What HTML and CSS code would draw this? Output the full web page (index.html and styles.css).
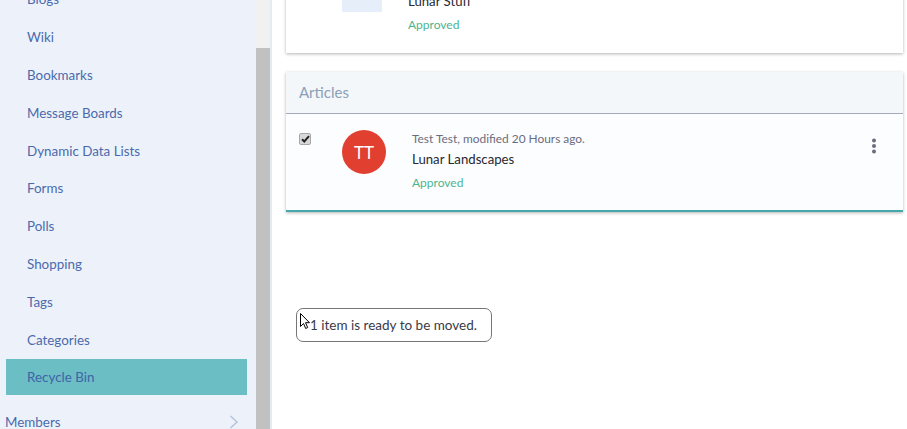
FILE: index.html
```html
<!DOCTYPE html>
<html lang="en">
<head>
<meta charset="utf-8">
<title>Recycle Bin</title>
<link rel="stylesheet" href="styles.css">
</head>
<body>
<div class="page">
  <aside class="sidebar">
    <nav class="nav">
      <a class="nav-item">Blogs</a>
      <a class="nav-item">Wiki</a>
      <a class="nav-item">Bookmarks</a>
      <a class="nav-item">Message Boards</a>
      <a class="nav-item">Dynamic Data Lists</a>
      <a class="nav-item">Forms</a>
      <a class="nav-item">Polls</a>
      <a class="nav-item">Shopping</a>
      <a class="nav-item">Tags</a>
      <a class="nav-item">Categories</a>
      <a class="nav-item active">Recycle Bin</a>
      <a class="nav-group">Members
        <svg class="chevron" width="10" height="14" viewBox="0 0 10 14"><path d="M1.500 1 8 7l-6.500 6" fill="none" stroke="#b4c3de" stroke-width="1.500"/></svg>
      </a>
    </nav>
  </aside>
  <div class="scrollbar"><div class="thumb"></div></div>
  <main class="main">
    <section class="card first">
      <div class="row row-top">
        <div class="thumb-col"><div class="doc-thumb"><span class="doc-mark"></span></div></div>
        <div class="info">
          <div class="title">Lunar Stuff</div>
          <div class="status">Approved</div>
        </div>
      </div>
    </section>
    <section class="card">
      <header class="card-head">Articles</header>
      <div class="row row-article">
        <span class="check"><svg width="9" height="8" viewBox="0 0 9 8"><path d="M1 4.200 3.300 6.500 8 1.200" fill="none" stroke="#222" stroke-width="2"/></svg></span>
        <div class="avatar">TT</div>
        <div class="info">
          <div class="meta">Test Test, modified 20 Hours ago.</div>
          <div class="title">Lunar Landscapes</div>
          <div class="status">Approved</div>
        </div>
        <svg class="kebab" width="6" height="16" viewBox="0 0 6 16"><circle cx="3" cy="2.500" r="2" fill="#6b6c7e"/><circle cx="3" cy="8" r="2" fill="#6b6c7e"/><circle cx="3" cy="13.500" r="2" fill="#6b6c7e"/></svg>
      </div>
    </section>
    <div class="drag-tip">1 item is ready to be moved.
      <svg class="cursor" width="11" height="17" viewBox="0 0 11 17"><path d="M.5.500v13l3-3 2.200 5 2-1-2.200-4.800H9.500z" fill="#fff" stroke="#000"/></svg>
    </div>
  </main>
</div>
</body>
</html>
```
FILE: styles.css
```css
* { box-sizing: border-box; }
html, body { margin: 0; height: 100%; overflow: hidden; background: #fff; }
body { font-family: Lato, sans-serif; font-size: 13.400px; color: #272833; }
.page { display: flex; height: 429px; width: 907px; overflow: hidden; }
.sidebar { width: 256px; flex: none; background: #edf2fa; overflow: hidden; }
.nav { display: flex; flex-direction: column; margin-top: -20px; padding-left: 6px; }
.nav-item { display: flex; align-items: center; height: 37.900px; width: 241px; padding-left: 21px; color: #4b6aad; }
.nav-item.active { background: #6bbec3; height: 36px; color: #3f64a8; }
.nav-group { display: flex; justify-content: space-between; align-items: center; margin: 9px 17px 0 -1px; height: 36px; color: #4b6aad; }
.scrollbar { width: 14px; flex: none; background: #f1f1f1; padding-top: 48px; }
.thumb { height: 100%; background: #c1c1c1; }
.main { flex: 1; border-left: 2px solid #e3ebf5; padding: 0 4px 0 14px; position: relative; }
.card { background: #fff; box-shadow: 0 1px 3px rgba(39, 40, 51, .35); }
.first { margin-top: -20px; height: 73px; margin-bottom: 19px; }
.row { display: flex; align-items: flex-start; }
.row-top { padding-left: 56px; }
.thumb-col { width: 66px; flex: none; }
.doc-thumb { width: 40px; height: 32px; background: #e6eff9; display: flex; justify-content: center; align-items: flex-start; padding-top: 18px; }
.doc-mark { width: 12px; height: 2px; background: #a7a9bc; }
.card-head { height: 42px; background: #f4f7fa; border-bottom: 1px solid #a7a9bc; display: flex; align-items: center; padding: 0 0 2px 13px; font-size: 15px; color: #8aa0b8; }
.row-article { position: relative; height: 98px; background: #fcfdfe; border-bottom: 2px solid #45a8ac; padding: 16px 0 0 13px; }
.check { width: 12px; height: 12px; margin: 3px 31px 0 0; flex: none; display: flex; align-items: center; justify-content: center; background: #d8d8d8; border: 1px solid #a8a8a8; border-radius: 2px; }
.avatar { width: 44px; height: 44px; border-radius: 50%; background: #e14031; color: #fff; font-size: 17px; display: flex; align-items: center; justify-content: center; margin-right: 26px; flex: none; }
.info { display: flex; flex-direction: column; }
.meta { color: #6b6c7e; font-size: 11.900px; line-height: 18px; }
.title { color: #272833; font-size: 13.200px; line-height: 22px; }
.row-top .title { margin-top: 10px; }
.status { color: #4cb58f; font-size: 12px; line-height: 18px; margin-top: 4px; }
.kebab { position: absolute; right: 26px; top: 24px; }
.drag-tip { position: absolute; left: 24px; top: 308px; width: 196px; height: 34px; border: 1px solid #767676; border-radius: 7px; background: #fff; display: flex; align-items: center; padding-left: 13px; font-size: 13.500px; color: #393a4a; }
.cursor { position: absolute; left: 3px; top: 4px; }
```
